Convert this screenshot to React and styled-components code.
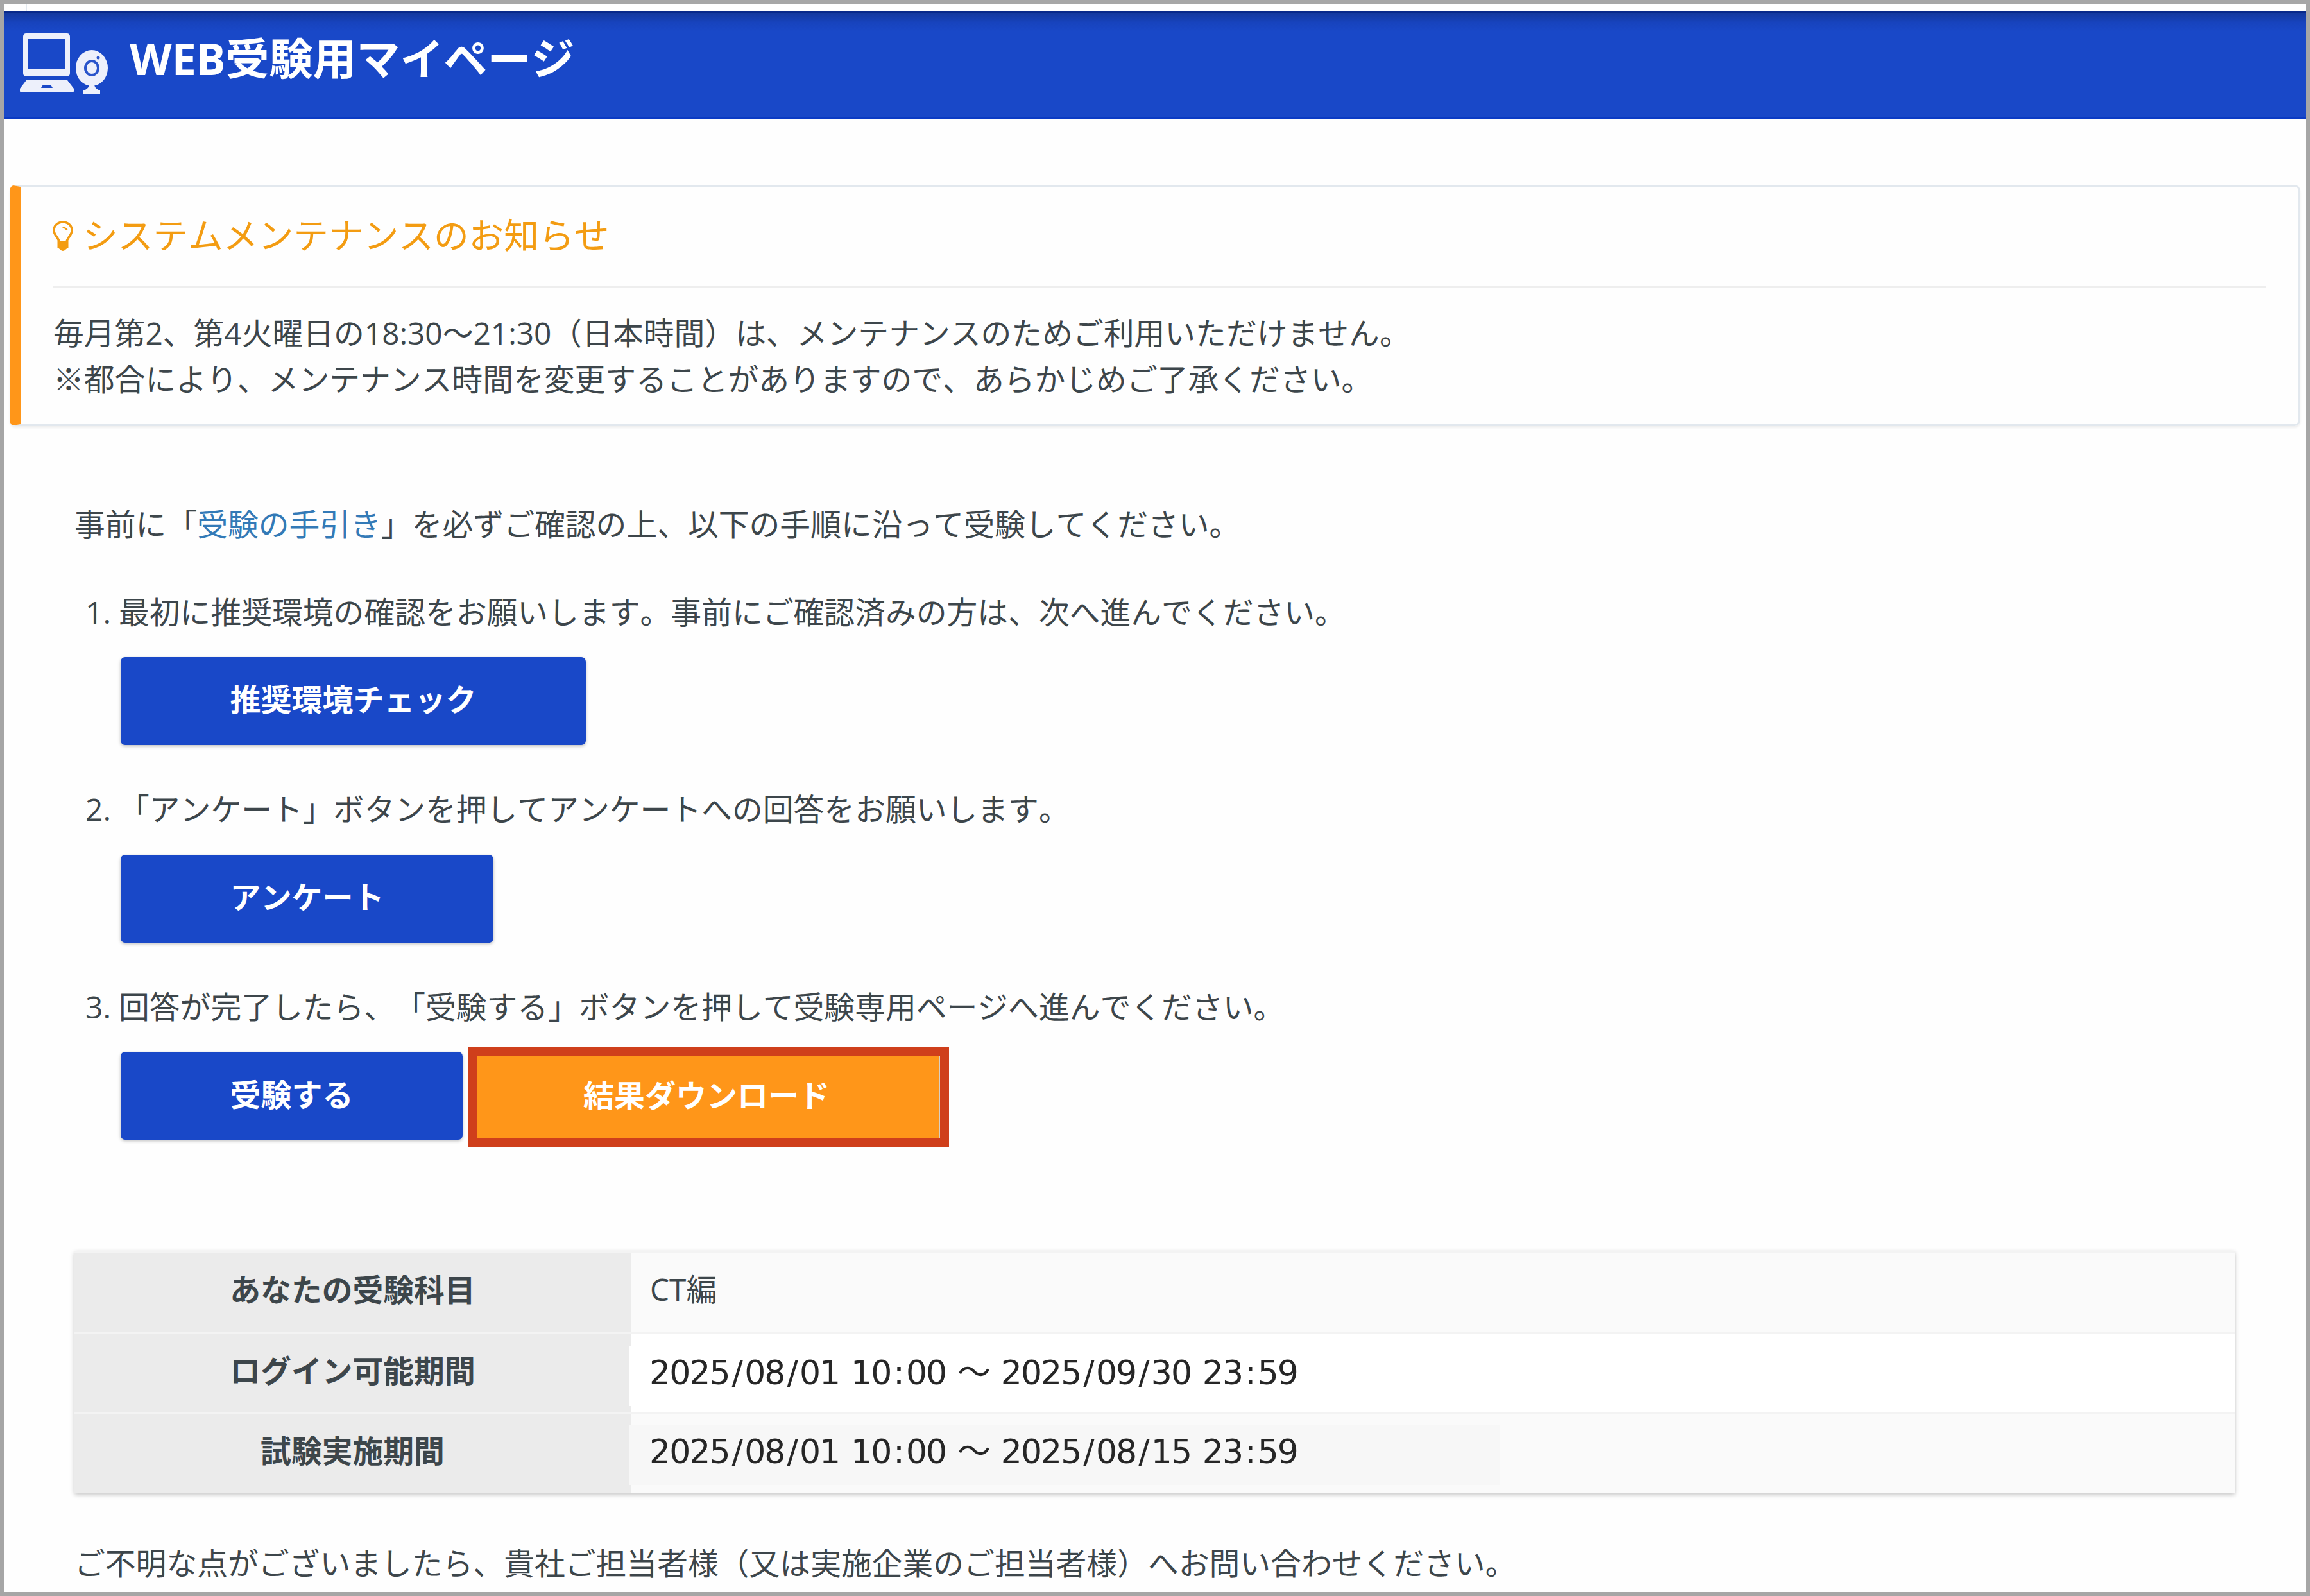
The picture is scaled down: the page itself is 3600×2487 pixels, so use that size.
import React from 'react'
import styled, { createGlobalStyle } from 'styled-components'

const steps = [
    {
        text: '最初に推奨環境の確認をお願いします。事前にご確認済みの方は、次へ進んでください。',
        buttons: [{ name: '推奨環境チェック' }],
    },
    {
        text: '「アンケート」ボタンを押してアンケートへの回答をお願いします。',
        buttons: [{ name: 'アンケート' }],
    },
    {
        text: '回答が完了したら、「受験する」ボタンを押して受験専用ページへ進んでください。',
        buttons: [{ name: '受験する' }, { name: '結果ダウンロード', download: true }],
    },
]

function DeviceIcon() {
    return (
        <DeviceIconStyled viewBox="0 0 138 96" aria-hidden="true">
            <path
                fillRule="evenodd"
                d="M10 0H73Q78 0 78 5V62Q78 67 73 67H10Q5 67 5 62V5Q5 0 10 0ZM12 9V56H71V9Z"
            />
            <path
                fillRule="evenodd"
                d="M10 73H74L84 86V90Q84 92 82 92H2Q0 92 0 90V86ZM36 80L33 85H51L48 80Z"
            />
            <ellipse cx="112" cy="54" rx="25" ry="28" />
            <path d="M108 81H116Q118 87 125 89V94H99V89Q106 87 108 81Z" />
            <ellipse className="lens" cx="112" cy="54" rx="10" ry="11" />
            <circle className="dot" cx="122" cy="38" r="2.5" />
        </DeviceIconStyled>
    )
}

function BulbIcon() {
    return (
        <BulbIconStyled viewBox="0 0 32 48" aria-hidden="true">
            <path className="glass" d="M10 33C9.500 26 2 23 2 15C2 7 8.500 2 16 2S30 7 30 15C30 23 22.500 26 22 33" />
            <path className="shine" d="M15.500 10.500C18.500 10.500 21 12 22.500 14.500" />
            <path d="M7.500 32H24.500V42Q22 43 20 45Q16 49 12 45Q10 43 7.500 42Z" />
        </BulbIconStyled>
    )
}

function Period({ value }) {
    return (
        <PeriodStyled>
            {value.split(/([/:])/).map((part, i) => (
                i % 2 ? <i key={i}>{part}</i> : part
            ))}
        </PeriodStyled>
    )
}

function App() {
    return (
        <PageStyled lang="ja">
            <GlobalStyle />
            <TopStripStyled />
            <HeaderStyled>
                <DeviceIcon />
                <h1>WEB受験用マイページ</h1>
            </HeaderStyled>
            <NoticeStyled>
                <h2>
                    <BulbIcon />
                    システムメンテナンスのお知らせ
                </h2>
                <p>
                    毎月第2、第4火曜日の18:30～21:30（日本時間）は、メンテナンスのためご利用いただけません。
                    <br />
                    ※都合により、メンテナンス時間を変更することがありますので、あらかじめご了承ください。
                </p>
            </NoticeStyled>
            <ContentStyled>
                <p>
                    事前に「<a href="#guide">受験の手引き</a>」を必ずご確認の上、以下の手順に沿って受験してください。
                </p>
                <StepListStyled>
                    {steps.map((step, i) => (
                        <StepStyled key={i}>
                            <span className="number">{i + 1}.</span>
                            <div>
                                <p>{step.text}</p>
                                <ButtonRowStyled>
                                    {step.buttons.map((button) => (
                                        <ButtonStyled key={button.name} $download={button.download}>
                                            {button.name}
                                        </ButtonStyled>
                                    ))}
                                </ButtonRowStyled>
                            </div>
                        </StepStyled>
                    ))}
                </StepListStyled>
                <InfoTableStyled>
                    <InfoRowStyled $striped>
                        <dt>あなたの受験科目</dt>
                        <dd>CT編</dd>
                    </InfoRowStyled>
                    <InfoRowStyled $patch="#ffffff">
                        <dt>ログイン可能期間</dt>
                        <dd><Period value="2025/08/01 10:00 ～ 2025/09/30 23:59" /></dd>
                    </InfoRowStyled>
                    <InfoRowStyled $striped $patch="#f7f7f7">
                        <dt>試験実施期間</dt>
                        <dd><Period value="2025/08/01 10:00 ～ 2025/08/15 23:59" /></dd>
                    </InfoRowStyled>
                </InfoTableStyled>
                <p>ご不明な点がございましたら、貴社ご担当者様（又は実施企業のご担当者様）へお問い合わせください。</p>
            </ContentStyled>
        </PageStyled>
    )
}

const GlobalStyle = createGlobalStyle`
    * {
        box-sizing: border-box;
        margin: 0;
        padding: 0;
    }
    body {
        background: #fff;
        overflow: hidden;
    }
`

const PageStyled = styled.div`
    width: 3600px;
    height: 2487px;
    overflow: hidden;
    border: 6px solid #a6a6a6;
    background: #fefefe;
    color: #3d464b;
    font-family: 'Open Sans', 'Noto Sans CJK JP', sans-serif;
    font-size: 47.8px;
    font-kerning: none;
    line-height: 71.6px;
    white-space: nowrap;
    text-spacing-trim: space-all;
`

const TopStripStyled = styled.div`
    width: 36px;
    height: 11px;
    border-right: 2px solid #e2e8ee;
`

const HeaderStyled = styled.header`
    display: flex;
    align-items: flex-start;
    height: 168px;
    padding-left: 25px;
    background: linear-gradient(#08298a 0, #08298a 3px, #14399f 4px, #1743bd 18px, #1948c8 32px, #1948c8 165px, #0b3bc4 166px);
    h1 {
        margin: 26px 0 0 33px;
        color: #fff;
        font-size: 68px;
        font-weight: 700;
        line-height: 96px;
    }
`

const DeviceIconStyled = styled.svg`
    width: 138px;
    height: 96px;
    margin-top: 35px;
    fill: #edf0fb;
    .lens {
        stroke: #2a55cb;
        stroke-width: 4;
    }
    .dot {
        fill: #2a55cb;
    }
`

const NoticeStyled = styled.section`
    width: 3570px;
    height: 376px;
    margin: 103px 0 0 9px;
    padding: 37px 51px 0;
    border: 3px solid #e2e8ee;
    border-left: 17px solid #ff9619;
    border-radius: 9px;
    box-shadow: 0 3px 3px rgba(0, 0, 0, 0.06);
    h2 {
        display: flex;
        align-items: center;
        height: 121px;
        padding-bottom: 41px;
        border-bottom: 3px solid #eee;
        color: #f39c12;
        font-size: 54.7px;
        font-weight: 400;
    }
    p {
        margin-top: 34px;
    }
`

const BulbIconStyled = styled.svg`
    width: 32px;
    height: 48px;
    margin: 2px 15px 0 -1px;
    fill: currentColor;
    .glass,
    .shine {
        fill: none;
        stroke: currentColor;
        stroke-width: 3.6;
    }
    .shine {
        stroke-width: 2.4;
    }
`

const ContentStyled = styled.main`
    padding: 117px 111px 0 110px;
    a {
        color: #337ab7;
        text-decoration: none;
    }
`

const StepListStyled = styled.div`
    display: flex;
    flex-direction: column;
    gap: 65px;
    margin-top: 65px;
`

const StepStyled = styled.div`
    display: flex;
    .number {
        width: 57px;
        margin-right: 12px;
        text-align: right;
    }
`

const ButtonRowStyled = styled.div`
    display: flex;
    gap: 8px;
    height: 137px;
    margin-top: 35px;
    margin-bottom: -1px;
    padding-left: 3px;
`

const ButtonStyled = styled.button`
    flex: none;
    height: ${(props) => (props.$download ? 157 : 137)}px;
    margin-top: ${(props) => (props.$download ? -8 : 0)}px;
    padding: ${(props) => (props.$download ? '0 172px 7px 166px' : '0 170.5px 5px')};
    border: ${(props) => (props.$download ? '14px solid #cf3f1b' : 'none')};
    border-radius: ${(props) => (props.$download ? 0 : 7)}px;
    background: ${(props) => (props.$download ? '#ff9619' : '#1948c8')};
    box-shadow: ${(props) => (props.$download ? 'inset -2px 0 #d9cfc2' : '0 2px 5px rgba(0, 0, 0, 0.26)')};
    color: #fff;
    font: inherit;
    font-size: 48px;
    font-kerning: none;
    font-weight: 700;
`

const InfoTableStyled = styled.dl`
    margin: 174px 0 74px;
    box-shadow: 0 3px 7px rgba(0, 0, 0, 0.24);
`

const InfoRowStyled = styled.div`
    display: flex;
    height: 125.5px;
    border-top: 3px solid #f3f3f3;
    background: ${(props) => (props.$striped ? '#fafafa' : '#fff')};
    dt {
        width: 867px;
        padding: 22px 0 0;
        background: #ebebeb;
        font-weight: 700;
        text-align: center;
    }
    dd {
        padding-top: ${(props) => (props.$patch ? (props.$striped ? 17 : 19) : 21)}px;
        padding-left: ${(props) => (props.$patch ? 0 : 30)}px;
    }
    span {
        display: block;
        width: 1357px;
        height: 94px;
        margin-left: -3px;
        padding-left: 32px;
        background: ${(props) => props.$patch};
    }
`

const PeriodStyled = styled.span`
    color: #262626;
    font-family: 'DejaVu Sans', 'Noto Sans CJK JP', sans-serif;
    font-size: 52px;
    line-height: 84px;
    letter-spacing: -1.95px;
    word-spacing: 3.2px;
    i {
        padding: 0 4px;
        font-style: normal;
    }
`

export default App
